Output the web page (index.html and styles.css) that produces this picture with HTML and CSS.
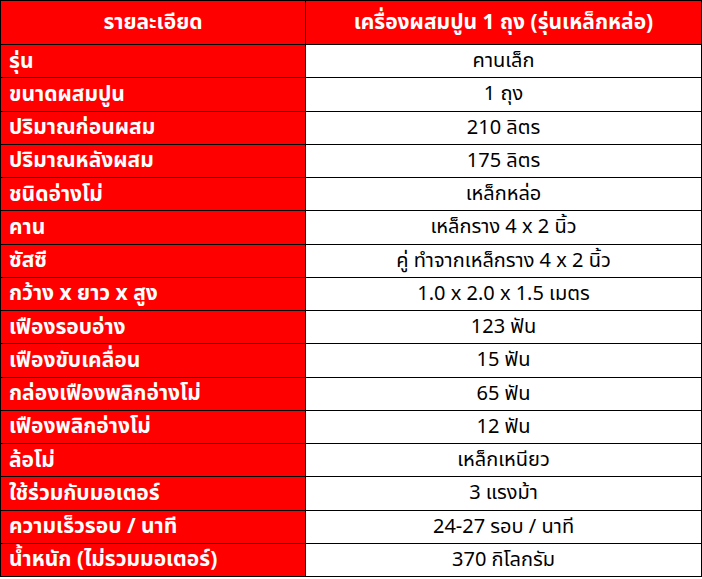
FILE: index.html
```html
<!DOCTYPE html>
<html lang="th">
<head>
<meta charset="utf-8">
<link rel="stylesheet" href="styles.css">
</head>
<body>
<table class="spec">
  <thead>
    <tr><th class="key">รายละเอียด</th><th class="val">เครื่องผสมปูน 1 ถุง (รุ่นเหล็กหล่อ)</th></tr>
  </thead>
  <tbody>
    <tr><td class="key">รุ่น</td><td class="val">คานเล็ก</td></tr>
    <tr><td class="key">ขนาดผสมปูน</td><td class="val">1 ถุง</td></tr>
    <tr><td class="key">ปริมาณก่อนผสม</td><td class="val">210 ลิตร</td></tr>
    <tr><td class="key">ปริมาณหลังผสม</td><td class="val">175 ลิตร</td></tr>
    <tr><td class="key">ชนิดอ่างโม่</td><td class="val">เหล็กหล่อ</td></tr>
    <tr><td class="key">คาน</td><td class="val">เหล็กราง 4 x 2 นิ้ว</td></tr>
    <tr><td class="key">ซัสซี</td><td class="val">คู่ ทำจากเหล็กราง 4 x 2 นิ้ว</td></tr>
    <tr><td class="key">กว้าง x ยาว x สูง</td><td class="val">1.0 x 2.0 x 1.5 เมตร</td></tr>
    <tr><td class="key">เฟืองรอบอ่าง</td><td class="val">123 ฟัน</td></tr>
    <tr><td class="key">เฟืองขับเคลื่อน</td><td class="val">15 ฟัน</td></tr>
    <tr><td class="key">กล่องเฟืองพลิกอ่างโม่</td><td class="val">65 ฟัน</td></tr>
    <tr><td class="key">เฟืองพลิกอ่างโม่</td><td class="val">12 ฟัน</td></tr>
    <tr><td class="key">ล้อโม่</td><td class="val">เหล็กเหนียว</td></tr>
    <tr><td class="key">ใช้ร่วมกับมอเตอร์</td><td class="val">3 แรงม้า</td></tr>
    <tr><td class="key">ความเร็วรอบ / นาที</td><td class="val">24-27 รอบ / นาที</td></tr>
    <tr><td class="key">น้ำหนัก (ไม่รวมมอเตอร์)</td><td class="val">370 กิโลกรัม</td></tr>
  </tbody>
</table>
</body>
</html>
```
FILE: styles.css
```css
html, body {
  margin: 0;
  padding: 0;
  background: #fff;
}
body {
  font-family: "Noto Sans Thai", "Noto Sans Thai UI", "Noto Sans", sans-serif;
}
.spec {
  border-collapse: collapse;
  width: 702px;
  table-layout: fixed;
}
.spec th, .spec td {
  border: 1px solid #000;
  padding: 0 8px;
  font-size: 20px;
  line-height: 1;
  white-space: nowrap;
  overflow: hidden;
}
.spec th {
  height: 43px;
  background: #ff0000;
  color: #fff;
  font-size: 21px;
  font-weight: 700;
  text-align: center;
}
.spec th.key { width: 288px; }
.spec td {
  height: 32.25px;
}
.spec td.key {
  background: #ff0000;
  color: #fff;
  font-size: 21px;
  font-weight: 700;
  text-align: left;
}
.spec td.val {
  background: #fff;
  color: #000;
  text-align: center;
}
```
